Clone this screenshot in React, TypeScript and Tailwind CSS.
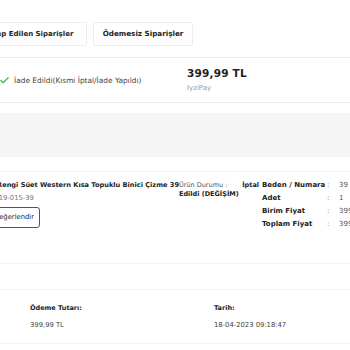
import { Check } from "lucide-react";

const rows = [
  { label: "Beden / Numara", value: "39" },
  { label: "Adet", value: "1" },
  { label: "Birim Fiyat", value: "399,99 TL" },
  { label: "Toplam Fiyat", value: "399,99 TL" },
];

export default function App() {
  return (
    <div className="h-[350px] w-[350px] overflow-hidden bg-white font-['DejaVu_Sans',sans-serif] text-[#222]">
      {/* tabs */}
      <div className="flex gap-[6px] pt-[22px] -ml-[28px]">
        <button className="h-[24px] w-[115px] whitespace-nowrap rounded-[2px] border border-[#eee] text-[7px] font-semibold">
          Talep Edilen Siparişler
        </button>
        <button className="h-[24px] w-[100px] whitespace-nowrap rounded-[2px] border border-[#eee] text-[7.2px] font-semibold">
          Ödemesiz Siparişler
        </button>
      </div>

      {/* order status */}
      <div className="mt-[11px] flex h-[46px] items-center border-y border-[#eee]">
        <div className="flex w-[188px] items-center gap-[4px] -ml-[1px] pt-[2px]">
          <Check className="h-[11px] w-[11px] text-[#3dbb5e]" strokeWidth={2.8} />
          <span className="whitespace-nowrap text-[7.4px] text-[#444]">
            İade Edildi(Kısmi İptal/İade Yapıldı)
          </span>
        </div>
        <div className="flex flex-col gap-[7px]">
          <span className="text-[10.5px] font-bold leading-none tracking-[0.2px]">399,99 TL</span>
          <span className="text-[7px] leading-none text-[#999]">IyziPay</span>
        </div>
      </div>

      {/* gray band */}
      <div className="mt-[10px] h-[44px] bg-[#f5f5f5]" />

      {/* product */}
      <div className="mt-[14px] flex h-[92px] border-t border-[#f4f4f4] pt-[9px]">
        <div className="flex w-[179px] shrink-0 flex-col">
          <span className="self-end whitespace-nowrap text-[6.6px] font-bold leading-[8px]">
            Taba Rengi Süet Western Kısa Topuklu Binici Çizme 39
          </span>
          <span className="mt-[5px] whitespace-nowrap text-[6.8px] leading-[8px] text-[#777] -ml-[10px]">
            KS19-015-39
          </span>
          <span className="mt-[5px] flex h-[21px] w-[52px] items-center justify-center rounded-[3px] border border-[#555] text-[6.8px] -ml-[12px]">
            Değerlendir
          </span>
        </div>
        <div className="flex w-[80px] shrink-0 flex-col text-[6.5px] leading-[9px]">
          <div className="flex justify-between whitespace-nowrap">
            <span className="text-[#555]">Ürün Durumu :</span>
            <span className="font-bold">İptal</span>
          </div>
          <span className="whitespace-nowrap font-bold">Edildi (DEĞİŞİM)</span>
        </div>
        <div className="ml-[3px] flex flex-col gap-[5px] text-[7px] leading-[8px]">
          {rows.map((r) => (
            <div key={r.label} className="flex whitespace-nowrap">
              <span className="w-[65px] font-bold">{r.label}</span>
              <span className="w-[12px] text-[#555]">:</span>
              <span className="text-[#555]">{r.value}</span>
            </div>
          ))}
        </div>
      </div>

      {/* spacer */}
      <div className="h-[26px] border-t border-[#f4f4f4]" />

      {/* payment */}
      <div className="flex h-[55px] border-y border-[#f4f4f4] pt-[14px]">
        <div className="flex w-[214px] flex-col gap-[9px] pl-[30px]">
          <span className="text-[6.5px] font-bold leading-[8px]">Ödeme Tutarı:</span>
          <span className="text-[6.8px] leading-[8px] text-[#444]">399,99 TL</span>
        </div>
        <div className="flex flex-col gap-[9px]">
          <span className="text-[6.5px] font-bold leading-[8px]">Tarih:</span>
          <span className="text-[6.8px] leading-[8px] text-[#444]">18-04-2023 09:18:47</span>
        </div>
      </div>
    </div>
  );
}
